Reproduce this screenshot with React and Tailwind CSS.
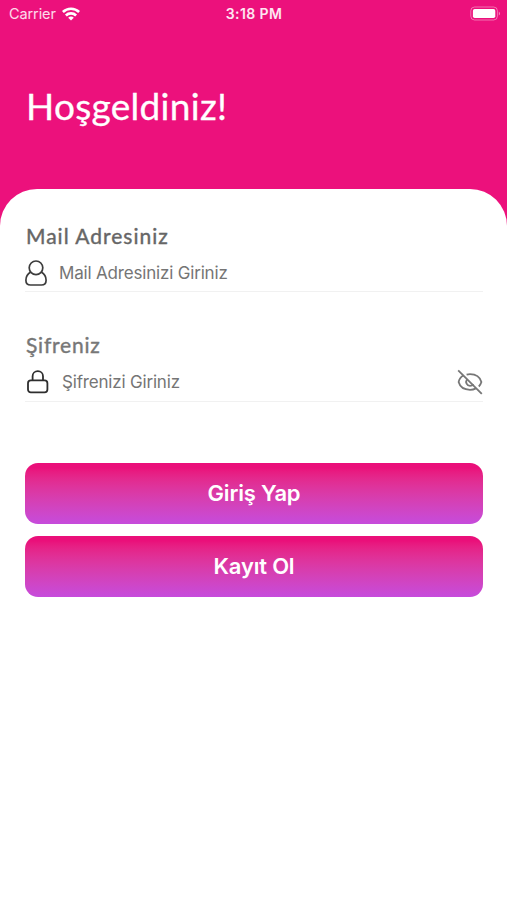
import React from 'react';

const WifiIcon = () => (
    <svg width="18" height="14" viewBox="0 0 18 14" fill="none" stroke="white" strokeWidth="2.6">
        <path d="M0.9 5C5.4 0.6 12.6 0.6 17.1 5" />
        <path d="M3.9 8.5C6.7 5.7 11.3 5.7 14.1 8.5" />
        <path d="M9 13.6L6.2 10.8C7.8 9.2 10.2 9.2 11.8 10.8Z" fill="white" stroke="none" />
    </svg>
);

const BatteryIcon = () => (
    <svg width="31" height="15" viewBox="0 0 31 15" fill="none">
        <rect x="0.8" y="1" width="26.6" height="13" rx="3.8" stroke="white" strokeOpacity="0.4" strokeWidth="1" />
        <rect x="2.9" y="3" width="22.4" height="9" rx="1.8" fill="white" />
        <path d="M28.8 5.4C30.4 6.2 30.4 8.8 28.8 9.6Z" fill="white" fillOpacity="0.5" />
    </svg>
);

const UserIcon = () => (
    <svg width="22" height="26" viewBox="0 0 22 26" fill="none" stroke="#3c3c3c" strokeWidth="1.7" strokeLinejoin="round">
        <circle cx="11" cy="7.8" r="6.8" />
        <path d="M5.7 12C2.7 13.8 0.9 16.8 0.9 20.2C0.9 23.3 2.7 25 5.6 25H16.4C19.3 25 21.1 23.3 21.1 20.2C21.1 16.8 19.3 13.8 16.3 12" />
    </svg>
);

const LockIcon = () => (
    <svg width="22" height="24" viewBox="0 0 22 24" fill="none" stroke="#2e2e2e" strokeWidth="1.8" strokeLinecap="round" strokeLinejoin="round">
        <rect x="1" y="10.4" width="19.4" height="12" rx="2.8" />
        <path d="M5.6 10.2V6.2C5.6 3.2 7.9 1.1 10.8 1.1C13.7 1.1 16 3.2 16 6.2V10.2" />
    </svg>
);

const EyeOffIcon = () => (
    <svg width="26" height="26" viewBox="0 0 26 26" fill="none" stroke="#777777" strokeWidth="1.8">
        <path d="M1.2 1.4L24.8 24.9" />
        <path d="M6.4 6.5C4 7.8 2.2 9.9 1.6 13.1C3 18 7.4 20.8 13 20.8C15.2 20.8 17.2 20.3 18.9 19.4" />
        <path d="M9.6 5.7C10.7 5.4 11.8 5.2 13 5.2C18.6 5.2 23 8.2 24.4 13.1C23.9 14.9 23 16.3 21.8 17.5" />
        <path d="M9.9 10.4C8.1 13.2 9.8 16.8 13 16.8C14.5 16.8 15.7 16.2 16.4 15.2" />
    </svg>
);

const GradientButton = ({ title }) => (
    <button className="flex h-[61px] w-full items-center justify-center rounded-[13px] bg-linear-to-b from-[#ea0f7a] from-8% to-[#c64bdc] font-['Inter',sans-serif] text-[22px] font-semibold tracking-[-0.2px] text-white">
        {title}
    </button>
);

const App = () => {
    return (
        <div className="h-[900px] w-full overflow-hidden bg-[#ec117c] font-['Inter',sans-serif]">
            <div className="grid h-[27px] grid-cols-3 items-center pl-[9px] pr-[6px] text-[14.5px] text-white">
                <div className="flex items-center gap-[6px]">
                    <span className="tracking-[-0.1px] text-white/85">Carrier</span>
                    <WifiIcon />
                </div>
                <span className="pr-[2px] text-center text-[14px] font-semibold tracking-[0.4px] text-white/90">3:18 PM</span>
                <div className="flex justify-end">
                    <BatteryIcon />
                </div>
            </div>

            <div className="h-[162px] pl-[26px] pt-[55px]">
                <h1 className="font-['Lato',sans-serif] text-[37px] leading-[48px] tracking-[0.3px] text-white [-webkit-text-stroke:0.3px_white]">Hoşgeldiniz!</h1>
            </div>

            <div className="h-[711px] rounded-t-[37px] bg-white pl-[25px] pr-6 pt-[33px]">
                <label className="block h-[28px] pl-px font-['Lato',sans-serif] text-[21px] leading-[28px] tracking-[1px] text-[#666666] [-webkit-text-stroke:0.4px_#666666]">Mail Adresiniz</label>
                <div className="flex h-[42px] items-center gap-3 border-b border-[#f1f1f1] pt-[5px]">
                    <UserIcon />
                    <span className="pt-[2px] text-[17px] tracking-[-0.18px] text-[#757575]">Mail Adresinizi Giriniz</span>
                </div>

                <label className="mt-[39px] block h-[28px] pl-px font-['Lato',sans-serif] text-[21px] leading-[27px] tracking-[0.8px] text-[#777777] [-webkit-text-stroke:0.4px_#777777]">Şifreniz</label>
                <div className="flex h-[43px] items-center border-b border-[#f1f1f1] pl-[2px] pt-[4px]">
                    <LockIcon />
                    <span className="ml-[13px] flex-1 pt-px text-[17px] tracking-[-0.18px] text-[#757575]">Şifrenizi Giriniz</span>
                    <EyeOffIcon />
                </div>

                <div className="mt-[60.5px] flex flex-col gap-[12.5px]">
                    <GradientButton title="Giriş Yap" />
                    <GradientButton title="Kayıt Ol" />
                </div>
            </div>
        </div>
    );
};

export default App;
